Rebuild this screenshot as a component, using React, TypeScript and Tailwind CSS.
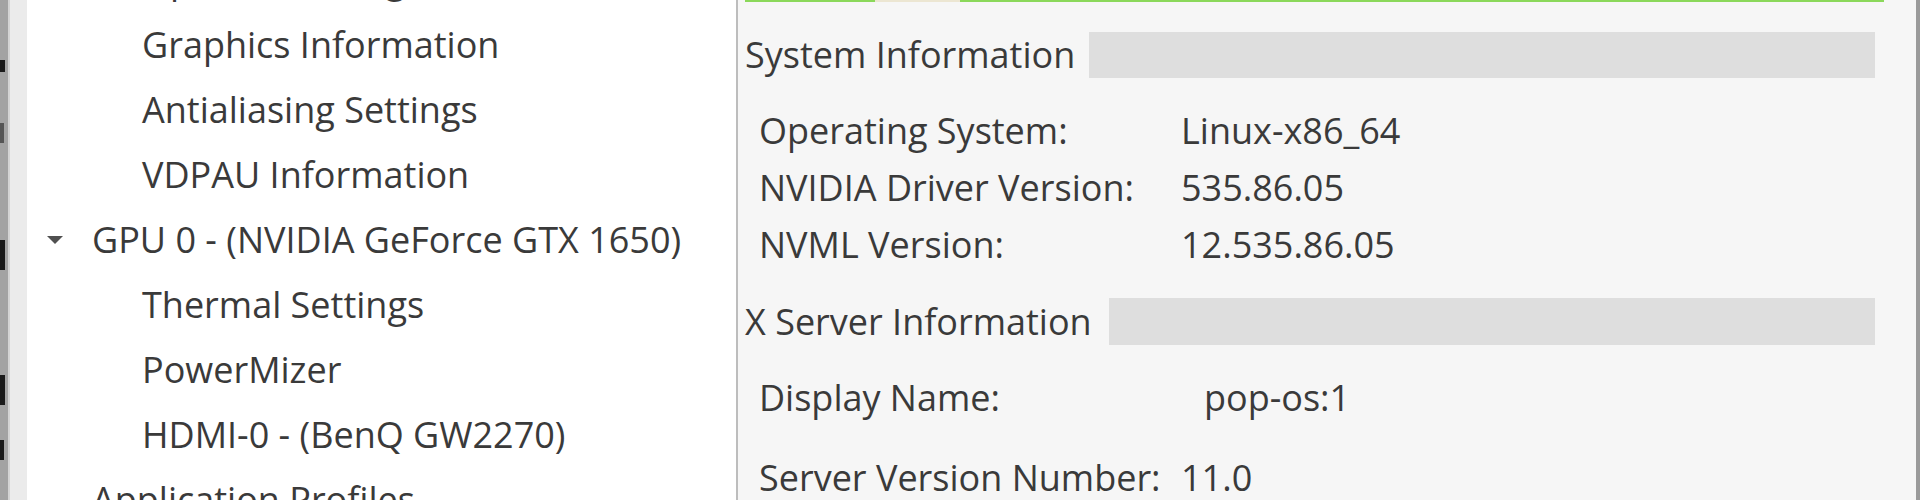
import React from 'react';

const font = { fontFamily: '"Open Sans", "Noto Sans", sans-serif' };

const treeRows: { label: string; level: 0 | 1; expanded?: boolean }[] = [
  { label: 'OpenGL Settings', level: 1 },
  { label: 'Graphics Information', level: 1 },
  { label: 'Antialiasing Settings', level: 1 },
  { label: 'VDPAU Information', level: 1 },
  { label: 'GPU 0 - (NVIDIA GeForce GTX 1650)', level: 0, expanded: true },
  { label: 'Thermal Settings', level: 1 },
  { label: 'PowerMizer', level: 1 },
  { label: 'HDMI-0 - (BenQ GW2270)', level: 1 },
  { label: 'Application Profiles', level: 0 },
];

const systemRows = [
  { label: 'Operating System:', value: 'Linux-x86_64' },
  { label: 'NVIDIA Driver Version:', value: '535.86.05' },
  { label: 'NVML Version:', value: '12.535.86.05' },
];

const SectionHeader = ({ title, gap }: { title: string; gap: string }) => (
  <div className="flex items-center h-full w-[1130px]">
    <span className="text-[36px] text-[#3a3a3a] leading-none whitespace-nowrap">{title}</span>
    <div className={`h-full flex-1 bg-[#dedede] ${gap}`} />
  </div>
);

const App = () => {
  return (
    <div className="w-[1920px] h-[500px] flex overflow-hidden bg-white" style={font}>
      {/* window behind */}
      <div className="w-[8px] h-full bg-[#a3a3a3] flex flex-col shrink-0">
        <div className="h-[60px] shrink-0" />
        <div className="w-[5px] h-[12px] bg-[#1a1a1a] shrink-0" />
        <div className="h-[51px] shrink-0" />
        <div className="w-[4px] h-[20px] bg-[#555] shrink-0" />
        <div className="h-[97px] shrink-0" />
        <div className="w-[5px] h-[30px] bg-[#1a1a1a] shrink-0" />
        <div className="h-[105px] shrink-0" />
        <div className="w-[5px] h-[30px] bg-[#1a1a1a] shrink-0" />
        <div className="h-[35px] shrink-0" />
        <div className="w-[4px] h-[20px] bg-[#1a1a1a] shrink-0" />
      </div>
      <div className="w-[19px] h-full bg-[#ebebeb] border-l-2 border-[#d4d4d4] shrink-0" />

      {/* tree */}
      <div className="w-[709px] h-full bg-white overflow-hidden shrink-0">
        <div className="mt-[-53px] flex flex-col">
          {treeRows.map((row) => (
            <div key={row.label} className="h-[65px] flex items-center shrink-0">
              {row.level === 0 ? (
                <div className="flex items-center">
                  <div className="w-[65px] flex justify-end pr-[28px]">
                    {row.expanded && (
                      <svg width="18" height="10" viewBox="0 0 18 10">
                        <path d="M1 1 L17 1 L9 9 Z" fill="#505050" />
                      </svg>
                    )}
                  </div>
                  <span className="text-[36px] text-[#3a3a3a] whitespace-nowrap">{row.label}</span>
                </div>
              ) : (
                <span className="pl-[115px] text-[36px] text-[#3a3a3a] whitespace-nowrap">{row.label}</span>
              )}
            </div>
          ))}
        </div>
      </div>

      <div className="w-[2px] h-full bg-[#bdbdbd] shrink-0" />

      {/* content */}
      <div className="flex-1 h-full bg-[#f6f6f6] flex flex-col pl-[7px] overflow-hidden">
        <div className="flex h-[2px] w-[1139px] shrink-0">
          <div className="w-[130px] bg-[#8bd85a]" />
          <div className="w-[85px] bg-[#ece6d2]" />
          <div className="flex-1 bg-[#8bd85a]" />
        </div>

        <div className="mt-[30px] h-[46px] shrink-0">
          <SectionHeader title="System Information" gap="ml-[14px]" />
        </div>

        <div className="mt-[24px] flex flex-col shrink-0">
          {systemRows.map((row) => (
            <div key={row.label} className="h-[57px] flex items-center text-[36px] text-[#3a3a3a] shrink-0">
              <span className="w-[436px] pl-[14px] whitespace-nowrap">{row.label}</span>
              <span className="whitespace-nowrap">{row.value}</span>
            </div>
          ))}
        </div>

        <div className="mt-[25px] h-[47px] shrink-0">
          <SectionHeader title="X Server Information" gap="ml-[17px]" />
        </div>

        <div className="mt-[13px] flex flex-col shrink-0">
          <div className="h-[80px] flex items-center text-[36px] text-[#3a3a3a] shrink-0">
            <span className="w-[459px] pl-[14px] whitespace-nowrap">Display Name:</span>
            <span className="whitespace-nowrap">pop-os:1</span>
          </div>
          <div className="h-[80px] flex items-center text-[36px] text-[#3a3a3a] shrink-0">
            <span className="w-[436px] pl-[14px] whitespace-nowrap">Server Version Number:</span>
            <span className="whitespace-nowrap">11.0</span>
          </div>
        </div>
      </div>

      <div className="w-[4px] h-full bg-[#9a9a9a] shrink-0" />
    </div>
  );
};

export default App;
